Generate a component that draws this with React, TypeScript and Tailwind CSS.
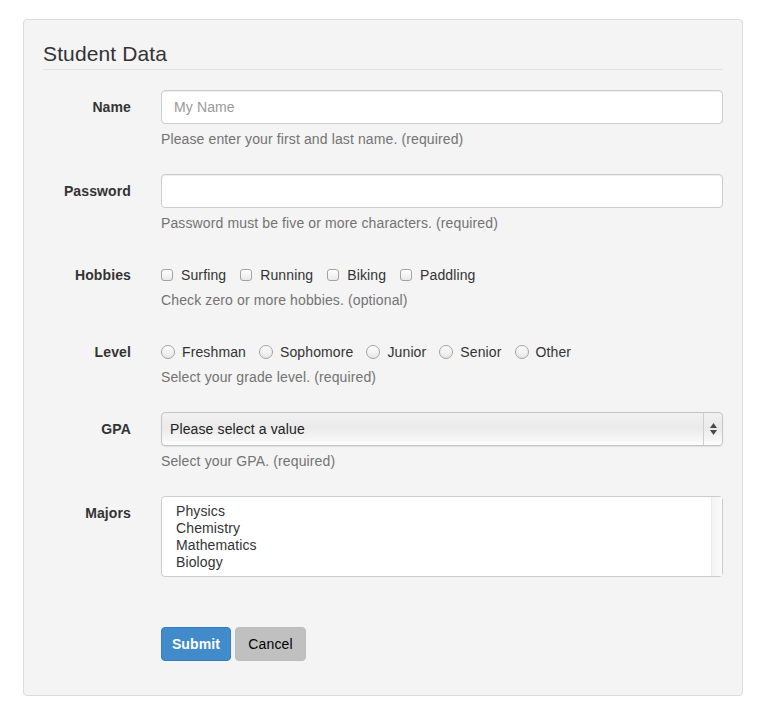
import React from "react";

function Checkbox({ label, first }: { label: string; first?: boolean }) {
  return (
    <label className={`inline-flex items-center ${first ? "" : "ml-[14px]"}`}>
      <span className="mr-[8px] inline-block h-[12px] w-[12px] rounded-[3px] border border-[#a3a3a3] bg-gradient-to-b from-[#ffffff] to-[#e9e9e9] shadow-[inset_0_1px_0_rgba(255,255,255,0.9)]" />
      <span>{label}</span>
    </label>
  );
}

function Radio({ label, first }: { label: string; first?: boolean }) {
  return (
    <label className={`inline-flex items-center ${first ? "" : "ml-[13px]"}`}>
      <span className="mr-[7px] inline-block h-[14px] w-[14px] rounded-full border border-[#a3a3a3] bg-gradient-to-b from-[#ffffff] to-[#e6e6e6]" />
      <span>{label}</span>
    </label>
  );
}

function Row({ label, children, className = "mb-[15px]" }: { label: string; children: React.ReactNode; className?: string }) {
  return (
    <div className={`flex ${className}`}>
      <div className="w-[88px] shrink-0 pt-[7px] text-right font-bold leading-5 text-[#333]">{label}</div>
      <div className="ml-[30px] flex-1">{children}</div>
    </div>
  );
}

function Help({ children }: { children: React.ReactNode }) {
  return <div className="mt-[5px] mb-[10px] leading-5 text-[#737373]">{children}</div>;
}

export default function App() {
  return (
    <div className="min-h-[724px] bg-white pl-[23px] pt-[19px] font-['Liberation_Sans',Arial,sans-serif] text-[14px] tracking-[0.12px] text-[#333]">
      <div className="w-[720px] rounded-[4px] border border-[#dcdcdc] bg-[#f4f4f4] p-[19px]">
        <div className="mb-[20px] border-b border-[#e2e2e2] text-[21px] leading-[30px] text-[#333]">Student Data</div>

        <Row label="Name">
          <input
            className="block h-[34px] w-full rounded-[4px] border border-[#ccc] bg-white px-3 text-[14px] tracking-[0.12px] text-[#555] shadow-[inset_0_1px_1px_rgba(0,0,0,0.075)] outline-none placeholder:text-[#999]"
            placeholder="My Name"
          />
          <Help>Please enter your first and last name. (required)</Help>
        </Row>

        <Row label="Password">
          <input
            type="password"
            className="block h-[34px] w-full rounded-[4px] border border-[#ccc] bg-white px-3 text-[14px] shadow-[inset_0_1px_1px_rgba(0,0,0,0.075)] outline-none"
          />
          <Help>Password must be five or more characters. (required)</Help>
        </Row>

        <Row label="Hobbies">
          <div className="flex pt-[7px] leading-5 text-[#333]">
            <Checkbox label="Surfing" first />
            <Checkbox label="Running" />
            <Checkbox label="Biking" />
            <Checkbox label="Paddling" />
          </div>
          <Help>Check zero or more hobbies. (optional)</Help>
        </Row>

        <Row label="Level">
          <div className="flex pt-[7px] leading-5 text-[#333]">
            <Radio label="Freshman" first />
            <Radio label="Sophomore" />
            <Radio label="Junior" />
            <Radio label="Senior" />
            <Radio label="Other" />
          </div>
          <Help>Select your grade level. (required)</Help>
        </Row>

        <Row label="GPA">
          <div className="flex h-[34px] w-full items-stretch rounded-[4px] border border-[#c4c4c4] bg-[linear-gradient(to_bottom,#f2f2f2,#eaeaea_45%,#f7f7f7_85%,#fdfdfd)] shadow-[0_1px_1px_rgba(0,0,0,0.08)]">
            <div className="flex flex-1 items-center pl-[8px] text-[14px] text-[#222]">Please select a value</div>
            <div className="flex w-[19px] flex-col items-center justify-center gap-[2px] border-l border-[#cfcfcf]">
              <svg width="7" height="5" viewBox="0 0 7 5"><path d="M3.5 0L7 5H0z" fill="#4a4a4a" /></svg>
              <svg width="7" height="5" viewBox="0 0 7 5"><path d="M0 0H7L3.5 5z" fill="#4a4a4a" /></svg>
            </div>
          </div>
          <Help>Select your GPA. (required)</Help>
        </Row>

        <Row label="Majors" className="mb-[50px]">
          <div className="flex h-[81px] w-full rounded-[4px] border border-[#ccc] bg-white">
            <div className="flex-1 pl-[14px] pt-[6px] text-[14px] leading-[17px] text-[#333]">
              <div>Physics</div>
              <div>Chemistry</div>
              <div>Mathematics</div>
              <div>Biology</div>
            </div>
            <div className="w-[11px] border-l border-[#ececec] bg-gradient-to-r from-[#f4f4f4] to-[#fafafa]" />
          </div>
        </Row>

        <div className="mb-[15px] flex">
          <div className="ml-[118px] flex gap-[4px]">
            <button className="h-[34px] w-[70px] rounded-[4px] border border-[#357ebd] bg-[#428bca] text-[14px] font-bold text-white">Submit</button>
            <button className="h-[34px] w-[71px] rounded-[4px] border border-[#bdbdbd] bg-[#c0c0c0] text-[14px] text-black">Cancel</button>
          </div>
        </div>
      </div>
    </div>
  );
}
